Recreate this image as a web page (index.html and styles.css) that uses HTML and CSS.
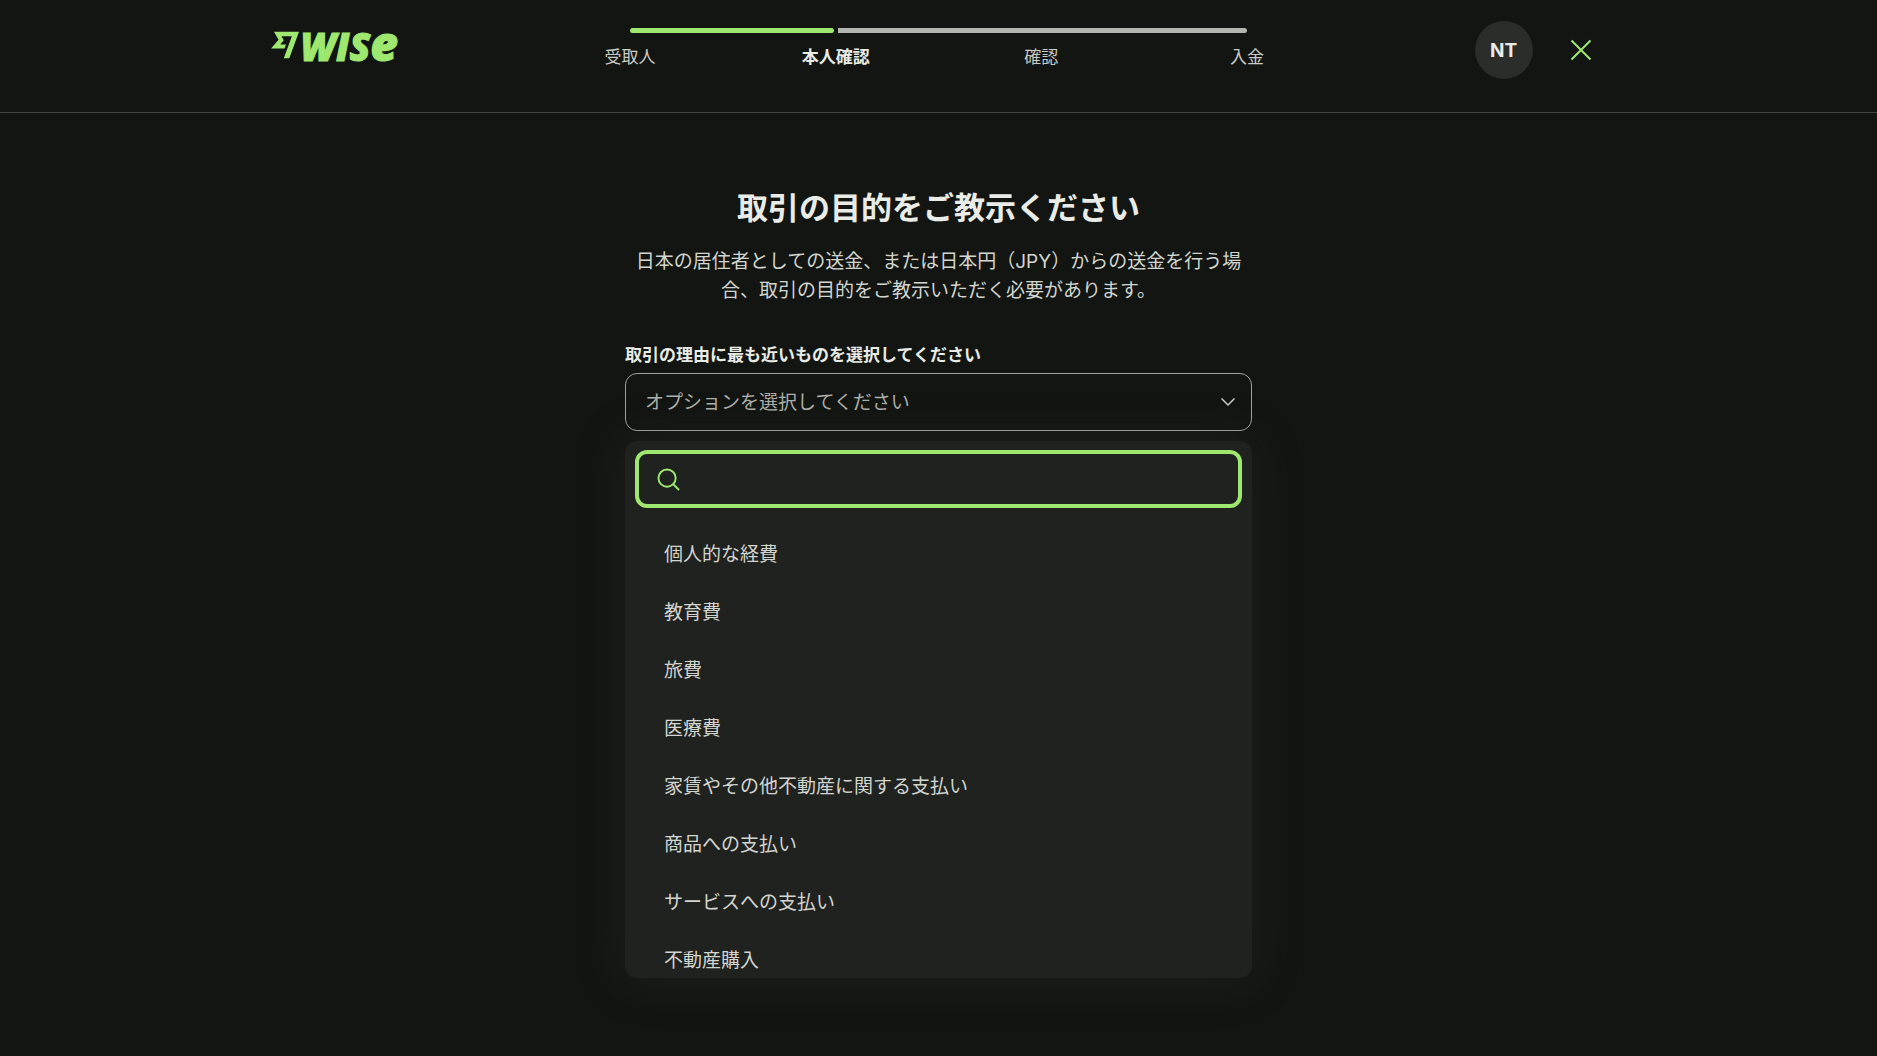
FILE: index.html
```html
<!DOCTYPE html>
<html lang="ja">

<head>
    <meta charset="UTF-8">
    <meta name="viewport" content="width=device-width, initial-scale=1.0">
    <title>取引の目的 - Wise</title>
    <link rel="stylesheet" href="styles.css">
</head>

<body>
    <header class="header">
        <div class="header-inner">
            <a class="logo" href="#" aria-label="Wise">
                <svg class="logo-flag" viewBox="0 0 24 24" aria-hidden="true">
                    <path d="M6.488 7.469 0 15.05h11.585l1.301-3.576H7.922l3.033-3.507.01-.092L8.993 4.48h8.873l-6.878 18.925h4.706L24 .595H2.543z" />
                </svg>
                <span class="logo-text">WIS<span class="logo-e">e</span></span>
            </a>

            <!-- steps -->
            <nav class="stepper" aria-label="ステップ">
                <div class="stepper-bar">
                    <span class="bar-done"></span>
                    <span class="bar-rest"></span>
                </div>
                <ol class="stepper-labels">
                    <li>受取人</li>
                    <li class="active" aria-current="step">本人確認</li>
                    <li>確認</li>
                    <li>入金</li>
                </ol>
            </nav>

            <div class="header-actions">
                <button type="button" class="avatar">NT</button>
                <button type="button" class="close" aria-label="閉じる">
                    <svg viewBox="0 0 24 24" aria-hidden="true">
                        <path d="M2.500 2.500 21.500 21.500M21.500 2.500 2.500 21.500" />
                    </svg>
                </button>
            </div>
        </div>
    </header>

    <main class="content">
        <h1>取引の目的をご教示ください</h1>
        <p class="lead">日本の居住者としての送金、または日本円（JPY）からの送金を行う場合、取引の目的をご教示いただく必要があります。</p>

        <form class="field">
            <label for="reason">取引の理由に最も近いものを選択してください</label>
            <div class="select-wrap">
                <select id="reason" name="reason">
                    <option value="">オプションを選択してください</option>
                </select>
                <svg class="chevron" viewBox="0 0 16 16" aria-hidden="true">
                    <path d="m1.500 4.500 6.500 6.500 6.500-6.500" />
                </svg>

                <!-- open menu -->
                <div class="menu">
                    <div class="search">
                        <svg viewBox="0 0 24 24" aria-hidden="true">
                            <circle cx="10.500" cy="10.500" r="9" />
                            <path d="m17 17 6 6" />
                        </svg>
                        <input type="text" name="search" aria-label="検索" autocomplete="off">
                    </div>
                    <ul class="options">
                        <li><button type="button">個人的な経費</button></li>
                        <li><button type="button">教育費</button></li>
                        <li><button type="button">旅費</button></li>
                        <li><button type="button">医療費</button></li>
                        <li><button type="button">家賃やその他不動産に関する支払い</button></li>
                        <li><button type="button">商品への支払い</button></li>
                        <li><button type="button">サービスへの支払い</button></li>
                        <li><button type="button">不動産購入</button></li>
                    </ul>
                </div>
            </div>
        </form>
    </main>
</body>

</html>
```
FILE: styles.css
```css
* {
    margin: 0;
    padding: 0;
    box-sizing: border-box;
}

body {
    min-height: 100vh;
    background: #121511;
    color: #d3d5d0;
    font-family: Inter, "Noto Sans CJK JP", sans-serif;
    font-size: 19px;
    line-height: 29px;
}

button,
input,
select {
    font: inherit;
    color: inherit;
    background: none;
    border: none;
    outline: none;
}

button,
select {
    cursor: pointer;
}

ul,
ol {
    list-style: none;
}

/* header */
.header {
    border-bottom: 1px solid #434541;
}

.header-inner {
    display: grid;
    grid-template-columns: 1fr minmax(0, 617px) 1fr;
    max-width: 1336px;
    min-height: 112px;
    margin: 0 auto;
    align-items: start;
}

.logo {
    display: flex;
    align-items: flex-start;
    gap: 2px;
    margin-top: 31px;
    color: #9fe870;
    text-decoration: none;
}

.logo-flag {
    width: 28px;
    height: 28px;
    fill: currentColor;
}

.logo-text {
    font-family: "Open Sans", sans-serif;
    font-size: 38px;
    font-style: italic;
    font-weight: 800;
    line-height: 24px;
    -webkit-text-stroke: 1px currentColor;
}

.logo-e {
    font-size: 48px;
    line-height: 24px;
}

.stepper {
    padding-top: 28px;
}

.stepper-bar {
    display: flex;
    gap: 4px;
    height: 5px;
}

.bar-done {
    flex: 1;
    border-radius: 3px;
    background: #9fe870;
}

.bar-rest {
    flex: 2;
    border-radius: 0 3px 3px 0;
    background: #b3b5b0;
}

.stepper-labels {
    display: flex;
    justify-content: space-between;
    margin-top: 12px;
    color: #c9cbc6;
    font-size: 17px;
    line-height: 24px;
}

.stepper-labels li {
    display: flex;
    justify-content: center;
    width: 0;
    white-space: nowrap;
}

.stepper-labels .active {
    color: #e8ebe6;
    font-weight: 700;
}

.header-actions {
    display: flex;
    justify-content: flex-end;
    align-items: center;
    gap: 22px;
    margin-top: 21px;
}

.avatar {
    width: 58px;
    height: 58px;
    border-radius: 50%;
    background: #2b2d2a;
    color: #e8ebe6;
    font-weight: 700;
}

.close {
    display: flex;
    justify-content: center;
    align-items: center;
    width: 52px;
    height: 52px;
}

.close svg {
    width: 24px;
    height: 24px;
    fill: none;
    stroke: #9fe870;
    stroke-width: 2;
}

/* content */
.content {
    max-width: 627px;
    margin: 0 auto;
    padding-top: 76px;
}

h1 {
    color: #e8ebe6;
    font-size: 31px;
    font-weight: 700;
    line-height: 38px;
    text-align: center;
}

.lead {
    margin-top: 20px;
    text-align: center;
}

.field {
    margin-top: 38px;
}

.field label {
    display: block;
    margin-bottom: 6px;
    color: #e8ebe6;
    font-size: 17px;
    font-weight: 700;
    line-height: 24px;
}

.select-wrap {
    position: relative;
}

.select-wrap select {
    display: block;
    width: 100%;
    height: 58px;
    padding: 0 48px 0 19px;
    border: 1px solid #9fa29c;
    border-radius: 12px;
    color: #aeb1ab;
    appearance: none;
}

.chevron {
    position: absolute;
    top: 21px;
    right: 16px;
    width: 16px;
    height: 16px;
    fill: none;
    stroke: #c9cbc6;
    stroke-width: 1.500;
    pointer-events: none;
}

.menu {
    position: absolute;
    top: 100%;
    left: 0;
    right: 0;
    max-height: 537px;
    margin-top: 10px;
    padding: 9px 10px;
    border-radius: 12px;
    background: #20221f;
    box-shadow: 0 0 48px rgba(69, 71, 69, 0.25);
    overflow: hidden auto;
    scrollbar-width: none;
}

.search {
    display: flex;
    align-items: center;
    gap: 16px;
    height: 58px;
    padding: 0 18px;
    border: 4px solid #9fe870;
    border-radius: 12px;
}

.search svg {
    flex: none;
    width: 23px;
    height: 23px;
    fill: none;
    stroke: #9fe870;
    stroke-width: 2;
}

.search input {
    flex: 1;
    min-width: 0;
}

.options {
    margin-top: 17px;
}

.options button {
    display: block;
    width: 100%;
    height: 58px;
    padding: 0 29px;
    border-radius: 12px;
    text-align: left;
}

.options button:hover {
    background: #2b2d2a;
}
```
